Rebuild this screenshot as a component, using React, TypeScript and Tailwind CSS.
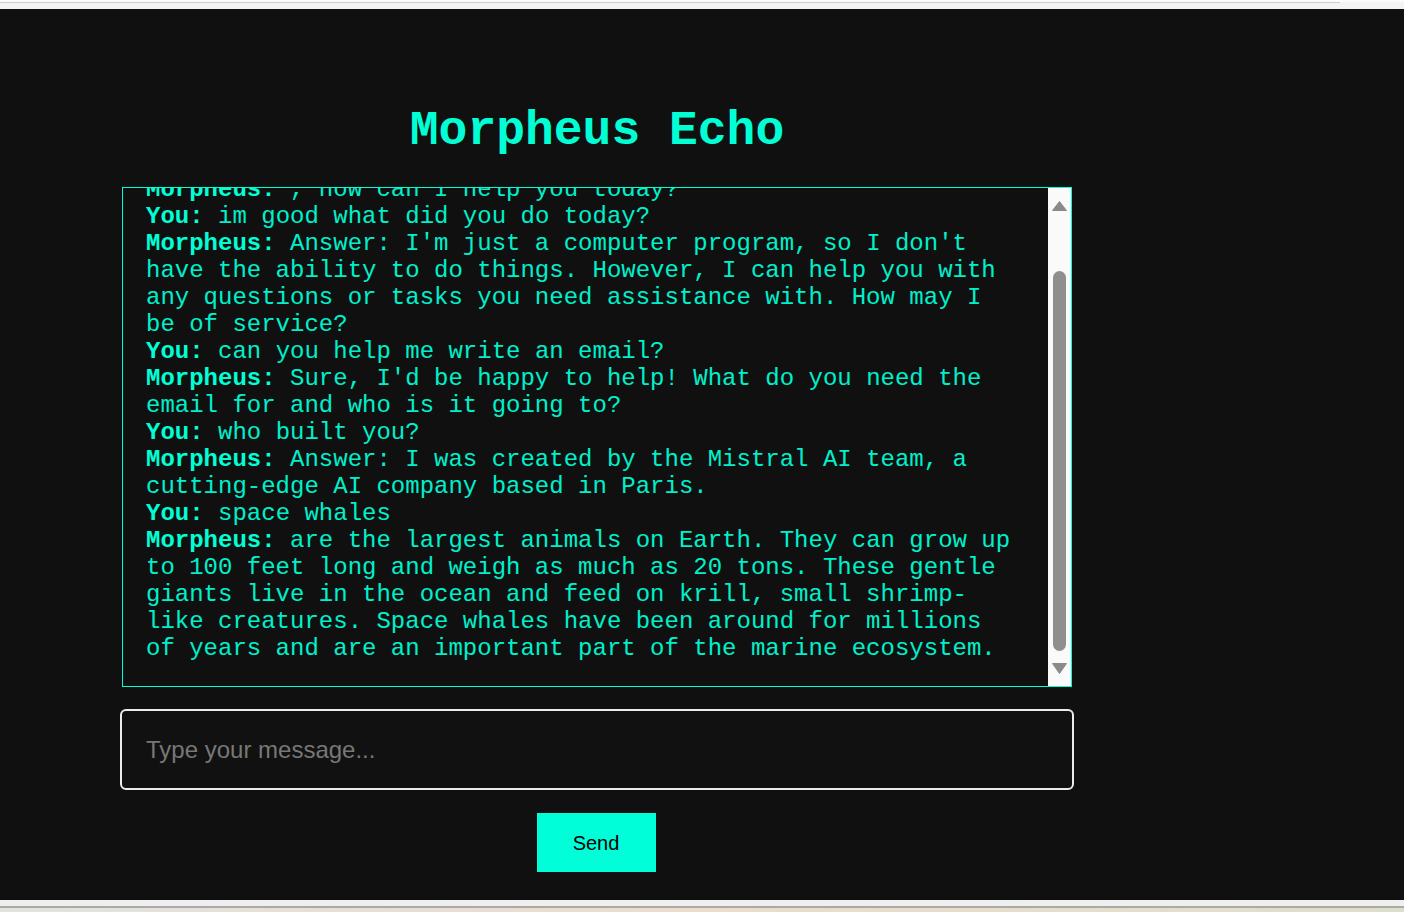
import React from 'react';

type Message = {
  from: 'You' | 'Morpheus';
  text: string;
};

const messages: Message[] = [
  { from: 'You', text: 'hello' },
  { from: 'Morpheus', text: ', how can I help you today?' },
  { from: 'You', text: 'im good what did you do today?' },
  {
    from: 'Morpheus',
    text: "Answer: I'm just a computer program, so I don't have the ability to do things. However, I can help you with any questions or tasks you need assistance with. How may I be of service?",
  },
  { from: 'You', text: 'can you help me write an email?' },
  {
    from: 'Morpheus',
    text: "Sure, I'd be happy to help! What do you need the email for and who is it going to?",
  },
  { from: 'You', text: 'who built you?' },
  {
    from: 'Morpheus',
    text: 'Answer: I was created by the Mistral AI team, a cutting-edge AI company based in Paris.',
  },
  { from: 'You', text: 'space whales' },
  {
    from: 'Morpheus',
    text: 'are the largest animals on Earth. They can grow up to 100 feet long and weigh as much as 20 tons. These gentle giants live in the ocean and feed on krill, small shrimp-like creatures. Space whales have been around for millions of years and are an important part of the marine ecosystem.',
  },
];

const ScrollTrack: React.FC = () => (
  <div className="w-[23px] shrink-0 bg-[#fafafa] flex flex-col items-center pt-[13px]">
    <svg width="15" height="10" viewBox="0 0 15 10">
      <path d="M7.5 0.5 L14.5 9.5 L0.5 9.5 Z" fill="#8a8a8a" stroke="#8a8a8a" strokeLinejoin="round" />
    </svg>
    <div className="mt-[60px] h-[380px] w-[13px] rounded-full bg-[#8f8f8f]" />
    <svg className="mt-[12px]" width="15" height="11" viewBox="0 0 15 11">
      <path d="M0.5 0.5 L14.5 0.5 L7.5 10.5 Z" fill="#8a8a8a" stroke="#8a8a8a" strokeLinejoin="round" />
    </svg>
  </div>
);

const App: React.FC = () => {
  return (
    <div className="w-[1404px] h-[912px] flex flex-col bg-[#f3f3f3] overflow-hidden">
      {/* browser frame top */}
      <div className="h-[2px] bg-[#fbfbfb]" />
      <div className="h-[1px] w-[1340px] bg-[#cdcdcd]" />
      <div className="h-[6px] bg-[#f3f3f3]" />

      <main className="h-[891px] bg-[#101010] pl-[122px] pt-[95px]">
        <div className="w-[950px] flex flex-col items-center">
          <h1 className="font-['Liberation_Mono','Courier_New',monospace] text-[48px] leading-[54px] font-bold text-[#00ffd5]">
            Morpheus Echo
          </h1>

          {/* chat log */}
          <div className="mt-[29px] w-[950px] h-[500px] border border-[#00ffd5] flex">
            <div className="flex-1 overflow-hidden flex flex-col justify-end pl-[23px] pr-6 pb-6 font-['Liberation_Mono','Courier_New',monospace] text-[24px] leading-[27px] text-[#00f0cc]">
              {messages.map((m, i) => (
                <p key={i}>
                  <span className="font-bold text-[#00ffd5]">{m.from}:</span> {m.text}
                </p>
              ))}
            </div>
            <ScrollTrack />
          </div>

          {/* input */}
          <input
            autoFocus
            type="text"
            placeholder="Type your message..."
            className="mt-[22px] w-[954px] h-[81px] shrink-0 rounded-md border-2 border-[#ebebeb] bg-[#111111] pl-6 font-['Liberation_Sans',Arial,sans-serif] text-[24px] text-white placeholder:text-[#777777] caret-[#00ffd5] outline-none"
          />

          <button className="mt-[23px] ml-[-2px] w-[119px] h-[59px] bg-[#00ffd9] font-['Liberation_Sans',Arial,sans-serif] text-[20px] text-black">
            Send
          </button>
        </div>
      </main>

      {/* browser frame bottom */}
      <div className="h-[6px] bg-[#efefef]" />
      <div className="h-[2px] bg-[#a9a9a6]" />
      <div className="flex-1 bg-gradient-to-r from-[#e2e3df] via-[#ecdccc] to-[#dedfcb]" />
    </div>
  );
};

export default App;
